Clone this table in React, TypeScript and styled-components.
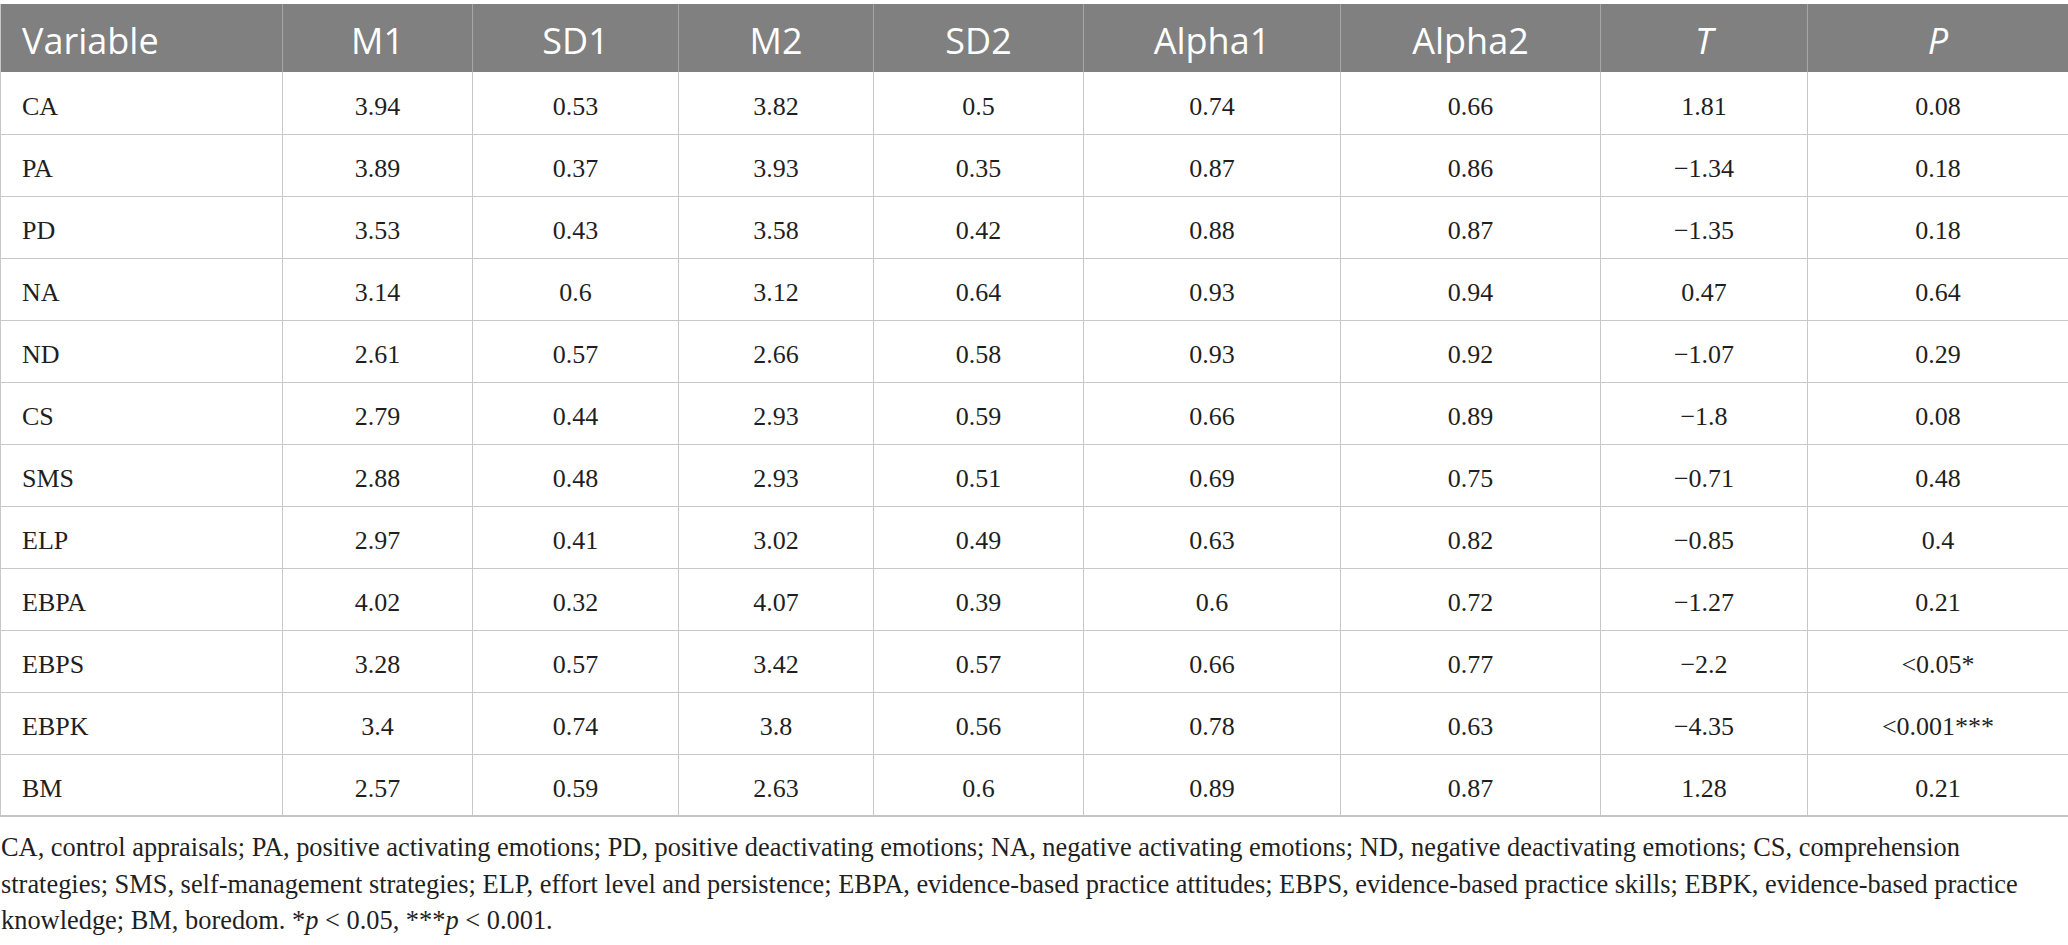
import styled, { createGlobalStyle } from "styled-components";

const GlobalStyle = createGlobalStyle`
  html, body {
    margin: 0;
    padding: 0;
    background: #ffffff;
  }
`;

const Page = styled.div`
  width: 2068px;
  padding-top: 4px;
  font-family: "Liberation Serif", "Times New Roman", serif;
  color: #1f1f1f;
`;

const Table = styled.table`
  width: 2068px;
  border-collapse: collapse;
  table-layout: fixed;
  border-left: 1px solid #c8c8c8;
`;

const Col = styled.col<{ $w: number }>`
  width: ${(p) => p.$w}px;
`;

const HeadRow = styled.tr`
  height: 68px;
  background: #7f807f;
`;

const HeadCell = styled.th<{ $left?: boolean; $italic?: boolean }>`
  padding: 4px 0 0 ${(p) => (p.$left ? "21px" : "0")};
  text-align: ${(p) => (p.$left ? "left" : "center")};
  font-family: "Open Sans", "Noto Sans", sans-serif;
  font-size: 36px;
  font-weight: 400;
  font-style: ${(p) => (p.$italic ? "italic" : "normal")};
  color: #ffffff;
  border-left: 1px solid #a6a6a6;
  border-right: 1px solid #a6a6a6;
  &:first-child {
    border-left: none;
  }
`;

const BodyRow = styled.tr<{ $last?: boolean }>`
  height: 62px;
  border-bottom: ${(p) => (p.$last ? "2px solid #c4c4c4" : "1px solid #c8c8c8")};
`;

const Cell = styled.td<{ $left?: boolean }>`
  padding: 8px 0 0 ${(p) => (p.$left ? "21px" : "0")};
  text-align: ${(p) => (p.$left ? "left" : "center")};
  font-size: 26px;
  border-left: 1px solid #c8c8c8;
  border-right: 1px solid #c8c8c8;
  &:first-child {
    border-left: none;
  }
`;

const Footnote = styled.p`
  margin: 12px 0 0 1px;
  font-size: 26.4px;
  line-height: 36.7px;
  color: #1f1f1f;
`;

const Stat = styled.span`
  font-style: italic;
`;

const widths = [282, 190, 206, 195, 210, 257, 260, 207, 261];

const rows: string[][] = [
  ["CA", "3.94", "0.53", "3.82", "0.5", "0.74", "0.66", "1.81", "0.08"],
  ["PA", "3.89", "0.37", "3.93", "0.35", "0.87", "0.86", "\u22121.34", "0.18"],
  ["PD", "3.53", "0.43", "3.58", "0.42", "0.88", "0.87", "\u22121.35", "0.18"],
  ["NA", "3.14", "0.6", "3.12", "0.64", "0.93", "0.94", "0.47", "0.64"],
  ["ND", "2.61", "0.57", "2.66", "0.58", "0.93", "0.92", "\u22121.07", "0.29"],
  ["CS", "2.79", "0.44", "2.93", "0.59", "0.66", "0.89", "\u22121.8", "0.08"],
  ["SMS", "2.88", "0.48", "2.93", "0.51", "0.69", "0.75", "\u22120.71", "0.48"],
  ["ELP", "2.97", "0.41", "3.02", "0.49", "0.63", "0.82", "\u22120.85", "0.4"],
  ["EBPA", "4.02", "0.32", "4.07", "0.39", "0.6", "0.72", "\u22121.27", "0.21"],
  ["EBPS", "3.28", "0.57", "3.42", "0.57", "0.66", "0.77", "\u22122.2", "<0.05*"],
  ["EBPK", "3.4", "0.74", "3.8", "0.56", "0.78", "0.63", "\u22124.35", "<0.001***"],
  ["BM", "2.57", "0.59", "2.63", "0.6", "0.89", "0.87", "1.28", "0.21"],
];

const headers = ["Variable", "M1", "SD1", "M2", "SD2", "Alpha1", "Alpha2", "T", "P"];

export default function App() {
  return (
    <Page>
      <GlobalStyle />
      <Table>
        <colgroup>
          {widths.map((w, i) => (
            <Col key={i} $w={w} />
          ))}
        </colgroup>
        <thead>
          <HeadRow>
            {headers.map((h, i) => (
              <HeadCell key={h} $left={i === 0} $italic={h === "T" || h === "P"}>
                {h}
              </HeadCell>
            ))}
          </HeadRow>
        </thead>
        <tbody>
          {rows.map((r, ri) => (
            <BodyRow key={r[0]} $last={ri === rows.length - 1}>
              {r.map((v, ci) => (
                <Cell key={ci} $left={ci === 0}>
                  {v}
                </Cell>
              ))}
            </BodyRow>
          ))}
        </tbody>
      </Table>
      <Footnote>
        CA, control appraisals; PA, positive activating emotions; PD, positive deactivating
        emotions; NA, negative activating emotions; ND, negative deactivating emotions; CS,
        comprehension strategies; SMS, self-management strategies; ELP, effort level and
        persistence; EBPA, evidence-based practice attitudes; EBPS, evidence-based practice
        skills; EBPK, evidence-based practice knowledge; BM, boredom. *<Stat>p</Stat> &lt; 0.05,
        ***<Stat>p</Stat> &lt; 0.001.
      </Footnote>
    </Page>
  );
}
